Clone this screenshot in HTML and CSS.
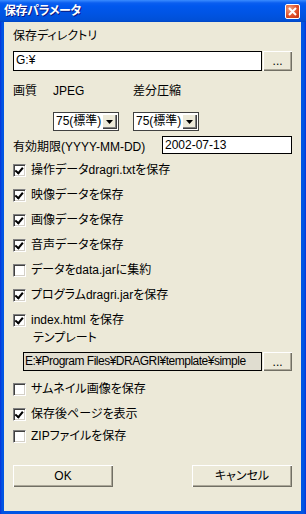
FILE: index.html
```html
<!DOCTYPE html>
<html lang="ja">
<head>
    <meta charset="UTF-8">
    <title>保存パラメータ</title>
    <link rel="stylesheet" href="styles.css">
</head>
<body>
    <div class="window">
        <div class="titlebar">
            <span class="title">保存パラメータ</span>
            <span class="close">
                <svg width="9" height="9" viewBox="0 0 9 9"><path d="M1 1L8 8M8 1L1 8" stroke="#fff" stroke-width="2"/></svg>
            </span>
        </div>
        <div class="client">
            <div class="label first">保存ディレクトリ</div>
            <div class="path-row">
                <div class="field wide">G:¥</div>
                <button class="btn small">...</button>
            </div>
            <div class="quality-labels">
                <span class="q-name">画質</span>
                <span class="q-jpeg">JPEG</span>
                <span>差分圧縮</span>
            </div>
            <div class="combo-row">
                <div class="combo">
                    <span class="combo-text">75(標準)</span>
                    <span class="combo-arrow"><svg width="7" height="4" viewBox="0 0 7 4"><path d="M0 0H7L3.5 4Z" fill="#000"/></svg></span>
                </div>
                <div class="combo">
                    <span class="combo-text">75(標準)</span>
                    <span class="combo-arrow"><svg width="7" height="4" viewBox="0 0 7 4"><path d="M0 0H7L3.5 4Z" fill="#000"/></svg></span>
                </div>
            </div>
            <div class="date-row">
                <span class="date-label">有効期限(YYYY-MM-DD)</span>
                <div class="field date">2002-07-13</div>
            </div>

            <div class="checks">
                <div class="check on"><span class="box"></span>操作データdragri.txtを保存</div>
                <div class="check on"><span class="box"></span>映像データを保存</div>
                <div class="check on"><span class="box"></span>画像データを保存</div>
                <div class="check on"><span class="box"></span>音声データを保存</div>
                <div class="check"><span class="box"></span>データをdata.jarに集約</div>
                <div class="check on"><span class="box"></span>プログラムdragri.jarを保存</div>
                <div class="check on"><span class="box"></span>index.html を保存</div>
            </div>
            <div class="label template-label">テンプレート</div>
            <div class="path-row template-row">
                <div class="field wide readonly">E:¥Program Files¥DRAGRI¥template¥simple</div>
                <button class="btn small">...</button>
            </div>
            <div class="checks lower">
                <div class="check"><span class="box"></span>サムネイル画像を保存</div>
                <div class="check on"><span class="box"></span>保存後ページを表示</div>
                <div class="check last"><span class="box"></span>ZIPファイルを保存</div>
            </div>
            <div class="buttons">
                <button class="btn big">OK</button>
                <button class="btn big">キャンセル</button>
            </div>
        </div>
    </div>
</body>
</html>
```

FILE: styles.css
```css
body {
    margin: 0;
    font-family: "Liberation Sans", "Noto Sans CJK JP", sans-serif;
    font-size: 12px;
    font-feature-settings: "palt";
    color: #000;
}
.window {
    width: 306px;
    height: 514px;
    background: linear-gradient(90deg, #0831d9 0, #0054e3 2px, #0058ee 50%, #0054e3 calc(100% - 2px), #0831d9 100%);
    display: flex;
    flex-direction: column;
}
.titlebar {
    height: 22px;
    background: linear-gradient(#3a8cff 0, #0a5ef0 3px, #0058ee 6px, #0054e3 14px, #0050d8 20px, #0046c4 22px);
    display: flex;
    align-items: center;
    justify-content: space-between;
    padding: 0 6px 0 4px;
}
.title {
    color: #fff;
    font-weight: bold;
    font-size: 12px;
    letter-spacing: -0.4px;
    text-shadow: 1px 1px #0a1883;
    line-height: 14px;
}
.close {
    width: 13px;
    height: 13px;
    border: 1px solid #fff;
    border-radius: 2px;
    background: radial-gradient(circle at 30% 30%, #f0a080, #e0502a 55%, #c03010);
    display: flex;
    align-items: center;
    justify-content: center;
}
.client {
    flex: 1;
    margin: 0 5px 3px 4px;
    background: #ece9d8;
    padding: 0 9px;
    display: flex;
    flex-direction: column;
}
.label {
    line-height: 14px;
    height: 14px;
}
.label.first {
    margin-top: 7px;
}
.path-row {
    display: flex;
    margin-top: 8px;
    height: 20px;
}
.field {
    background: #fff;
    border: 1px solid #000;
    box-sizing: border-box;
    line-height: 16px;
    padding-left: 2px;
    white-space: nowrap;
    overflow: hidden;
}
.field.wide {
    width: 250px;
    height: 20px;
}
.field.readonly {
    background: #e0ddd0;
    line-height: 17px;
    letter-spacing: -0.5px;
    padding-left: 1px;
}
.btn {
    font-family: inherit;
    font-size: 12px;
    font-feature-settings: "palt";
    background: #ece9d8;
    border: none;
    padding: 0;
    color: #000;
    box-shadow: inset 1px 1px #fff, inset -1px -1px #716f64, inset -2px -2px #aca899;
}
.btn.small {
    width: 29px;
    height: 20px;
    margin-left: 1px;
    line-height: 16px;
}
.quality-labels {
    margin-top: 13px;
    height: 14px;
    line-height: 14px;
    display: flex;
}
.q-name {
    width: 40px;
}
.q-jpeg {
    width: 80px;
}
.combo-row {
    margin-top: 14px;
    display: flex;
    gap: 14px;
    padding-left: 40px;
}
.combo {
    width: 66px;
    height: 19px;
    box-sizing: border-box;
    border: 1px solid #404040;
    background: #fff;
    display: flex;
    align-items: center;
    justify-content: space-between;
    padding: 1px;
}
.combo-text {
    line-height: 15px;
    padding-left: 1px;
    white-space: nowrap;
}
.combo-arrow {
    width: 15px;
    height: 15px;
    box-sizing: border-box;
    background: #ece9d8;
    box-shadow: inset 1px 1px #fff, inset -1px -1px #404040, inset -2px -2px #808080;
    display: flex;
    align-items: center;
    justify-content: center;
}
.date-row {
    margin-top: 5px;
    height: 18px;
    display: flex;
    align-items: center;
    justify-content: space-between;
}
.field.date {
    width: 130px;
    height: 18px;
    line-height: 16px;
}
.checks {
    margin-top: 10px;
    display: flex;
    flex-direction: column;
    gap: 12px;
}
.check {
    height: 13px;
    line-height: 13px;
    display: flex;
    align-items: center;
    gap: 5px;
    white-space: nowrap;
}
.box {
    width: 13px;
    height: 13px;
    box-sizing: border-box;
    background: #fff;
    border: 1px solid;
    border-color: #808080 #fff #fff #808080;
    box-shadow: inset 1px 1px #404040, inset -1px -1px #d4d0c8;
    flex: none;
    position: relative;
}
.check.on .box::after {
    content: "";
    position: absolute;
    left: 2px;
    top: 1px;
    width: 3px;
    height: 6px;
    border: solid #000;
    border-width: 0 2px 2px 0;
    transform: rotate(40deg);
    transform-origin: 60% 60%;
}
.template-label {
    margin-top: 4px;
    padding-left: 20px;
}
.template-row {
    margin-top: 7px;
    height: 19px;
    padding-left: 10px;
}
.template-row .field.wide {
    width: 240px;
    height: 19px;
}
.template-row .btn.small {
    height: 19px;
}
.checks.lower {
    margin-top: 12px;
}
.checks.lower .last {
    margin-top: -3px;
}
.buttons {
    margin-top: 22px;
    display: flex;
    justify-content: space-between;
}
.btn.big {
    width: 100px;
    height: 22px;
    line-height: 18px;
}
```
